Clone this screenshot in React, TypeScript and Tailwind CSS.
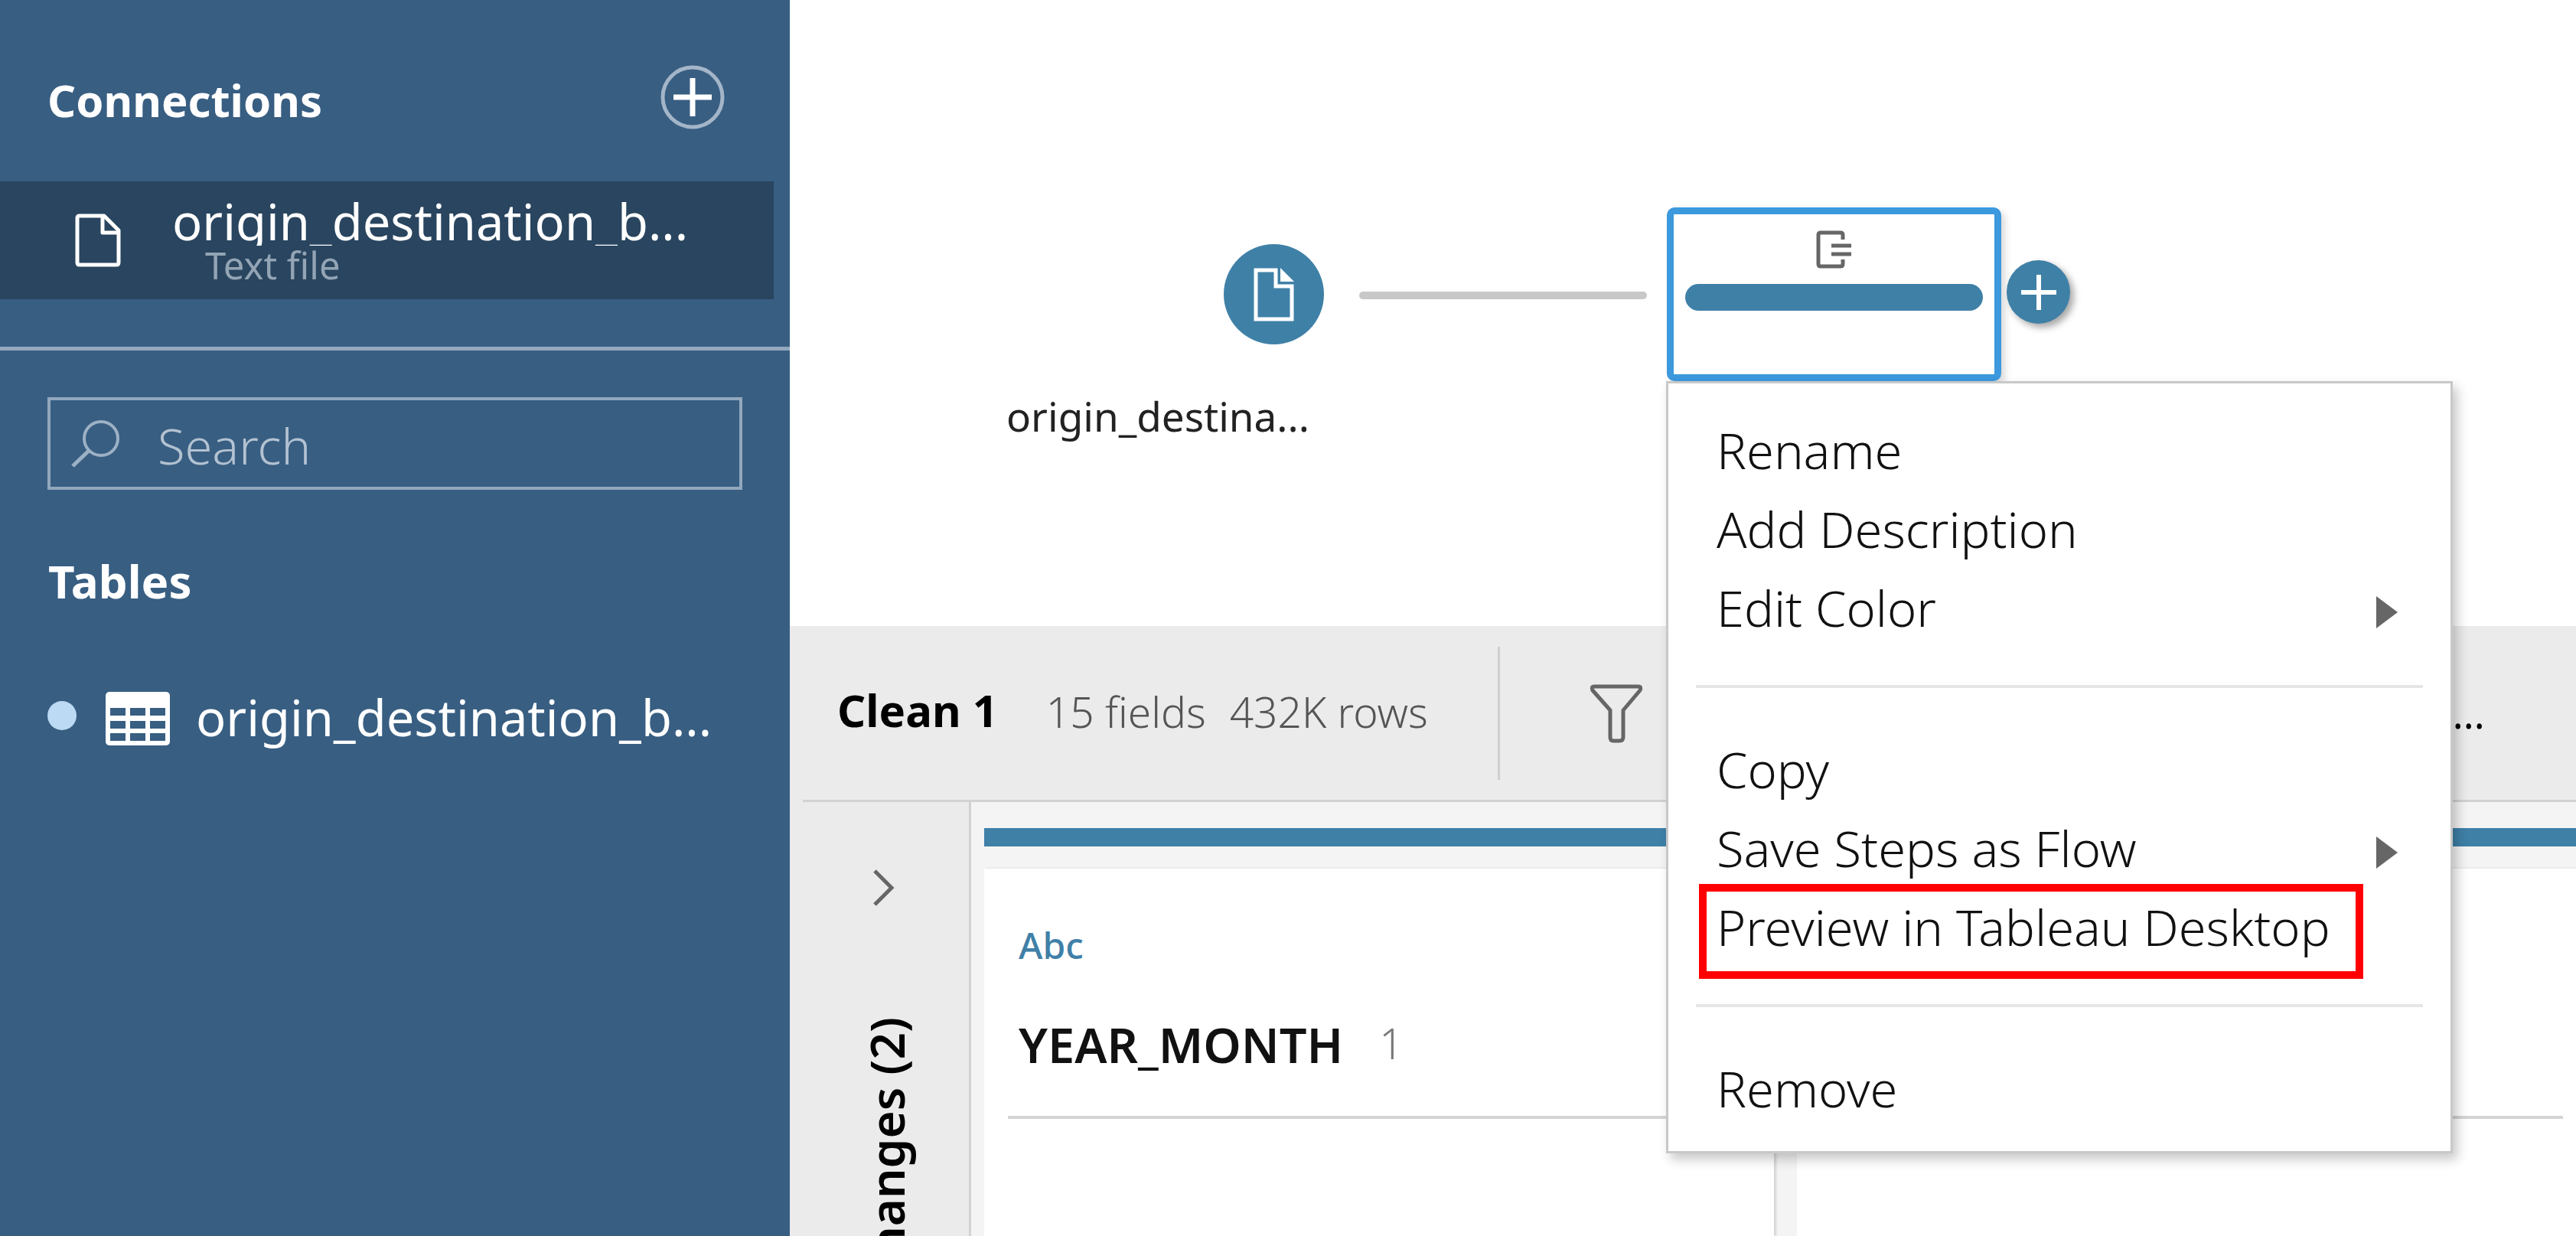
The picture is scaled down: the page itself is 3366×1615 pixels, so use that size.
import React from "react";

function FileIcon() {
  return (
    <svg width="60" height="70" viewBox="0 0 60 70" fill="none" stroke="#fff" strokeWidth="5" strokeLinejoin="round" aria-hidden="true">
      <path d="M6 3H38L57 22V64Q57 67 54 67H6Q3 67 3 64V6Q3 3 6 3Z" />
      <path d="M36 4V25H56" />
    </svg>
  );
}

function FileNodeIcon() {
  return (
    <svg width="54" height="70" viewBox="0 0 54 70" aria-hidden="true">
      <path d="M3 3H29V24H50V67H3Z" fill="none" stroke="#fff" strokeWidth="5" />
      <path d="M35 0L53 18H35Z" fill="#fff" />
    </svg>
  );
}

function TableIcon() {
  return (
    <svg width="84" height="70" viewBox="0 0 84 70" aria-hidden="true">
      <rect width="84" height="70" rx="5" fill="#fff" />
      <g fill="#385e82">
        {[21, 38, 54].map((y) =>
          [6, 32, 58].map((x) => <rect key={`${x}-${y}`} x={x} y={y} width="20" height="10" />),
        )}
      </g>
    </svg>
  );
}

function SearchIcon() {
  return (
    <svg width="64" height="62" viewBox="0 0 64 62" fill="none" stroke="#9db1c5" strokeWidth="4" aria-hidden="true">
      <circle cx="39" cy="24" r="22" />
      <path d="M24 39L2 60" strokeWidth="5" />
    </svg>
  );
}

function CleanIcon() {
  return (
    <svg width="48" height="50" viewBox="0 0 48 50" fill="none" stroke="#666" strokeWidth="5" aria-hidden="true">
      <path d="M35 12V6Q35 3 32 3H6Q3 3 3 6V44Q3 47 6 47H32Q35 47 35 44V38" />
      <path d="M20 20H46M20 31H46" />
    </svg>
  );
}

function FilterIcon() {
  return (
    <svg width="70" height="78" viewBox="0 0 70 78" fill="none" stroke="#666" strokeWidth="5" strokeLinejoin="round" aria-hidden="true">
      <path d="M6 4H64Q68 4 66 9L44 35V70Q44 75 39 75H31Q27 75 27 70V35L4 9Q2 4 6 4Z" />
    </svg>
  );
}

function SubmenuArrow() {
  return (
    <svg className="mt-3" width="28" height="42" viewBox="0 0 28 42" aria-hidden="true">
      <path d="M0 0L28 21L0 42Z" fill="#666" />
    </svg>
  );
}

function MenuItem({ label, submenu = false, marked = false }: { label: string; submenu?: boolean; marked?: boolean }) {
  return (
    <button
      type="button"
      role="menuitem"
      className="relative flex h-[103px] w-full items-center justify-between pr-[69px] pl-[63px] text-left text-[65px] leading-[88px] font-light text-[#111]"
    >
      {label}
      {submenu && <SubmenuArrow />}
      {marked && <span className="absolute -top-1 left-10 h-[124px] w-[868px] border-10 border-[#ff0000]" />}
    </button>
  );
}

function Separator() {
  return <div role="separator" className="mx-9 mt-[50px] mb-[54px] h-1 bg-[#e6e6e6]" />;
}

function StepMenu() {
  return (
    <div
      role="menu"
      aria-label="Clean 1"
      className="absolute top-[498px] left-[1145px] w-[1028px] border-3 border-[#c8c8c8] bg-white pt-[35px] pb-[31px] shadow-[6px_8px_14px_rgba(0,0,0,0.22)]"
    >
      <MenuItem label="Rename" />
      <MenuItem label="Add Description" />
      <MenuItem label="Edit Color" submenu />
      <Separator />
      <MenuItem label="Copy" />
      <MenuItem label="Save Steps as Flow" submenu />
      <MenuItem label="Preview in Tableau Desktop" marked />
      <Separator />
      <MenuItem label="Remove" />
    </div>
  );
}

function Sidebar() {
  return (
    <aside className="w-[1032px] shrink-0 bg-[#385e82] text-white">
      <div className="flex h-[237px] items-center justify-between pr-[85px] pb-[12px] pl-[62px]">
        <h2 className="pt-[36px] text-[58px] leading-[80px] font-bold">Connections</h2>
        <button type="button" aria-label="Add connection" className="mt-[28px]">
          <svg width="84" height="84" viewBox="0 0 84 84" fill="none" aria-hidden="true">
            <circle cx="42" cy="42" r="39" stroke="#a3b5c8" strokeWidth="5" />
            <path d="M42 17V67M17 42H67" stroke="#fff" strokeWidth="7" />
          </svg>
        </button>
      </div>

      <button type="button" className="flex h-[154px] w-[1011px] items-center bg-[#29455f] pl-[98px] text-left">
        <FileIcon />
        <span className="flex flex-col pl-[67px]">
          <span className="h-[64px] overflow-hidden text-[65px] leading-[64px] whitespace-nowrap">
            origin_destination_b...
          </span>
          <span className="pl-[43px] text-[49px] leading-[50px] text-[#93a4b5]">Text file</span>
        </span>
      </button>

      <div className="mt-[62px] h-[5px] bg-[#94a8be]" />

      <label className="mt-[61px] mr-[62px] ml-[62px] flex h-[121px] items-center border-4 border-[#93a8bd] pl-[27px]">
        <SearchIcon />
        <input
          type="text"
          aria-label="Search"
          placeholder="Search"
          className="ml-[49px] min-w-0 flex-1 bg-transparent pt-1 text-[65px] leading-[88px] font-light outline-none placeholder:text-[#b3c2d1]"
        />
      </label>

      <h2 className="mt-[79px] pl-[63px] text-[60px] leading-[80px] font-bold">Tables</h2>

      <button type="button" className="mt-[92px] flex items-center pl-[62px] text-left">
        <span className="size-[38px] rounded-full bg-[#bcdaf4]" />
        <span className="ml-[38px] pt-2">
          <TableIcon />
        </span>
        <span className="ml-[34px] pt-1 text-[65px] leading-[84px] whitespace-nowrap">origin_destination_b...</span>
      </button>
    </aside>
  );
}

function FlowCanvas() {
  return (
    <section aria-label="Flow" className="relative h-[818px] shrink-0 bg-white">
      <div className="absolute top-[319px] left-[567px] flex size-[131px] items-center justify-center rounded-full bg-[#3f80a7]">
        <FileNodeIcon />
      </div>
      <p className="absolute top-[508px] left-[283px] text-[53px] leading-[72px] whitespace-nowrap text-[#222]">
        origin_destina...
      </p>
      <div className="absolute top-[381px] left-[744px] h-[10px] w-[376px] rounded-full bg-[#c8c8c8]" />
      <button
        type="button"
        aria-label="Clean 1"
        className="absolute top-[271px] left-[1146px] flex h-[227px] w-[437px] flex-col items-center rounded-[10px] border-9 border-[#3c99dd] bg-white pt-[21px] shadow-[5px_5px_10px_rgba(0,0,0,0.15)]"
      >
        <CleanIcon />
        <span className="mt-5 h-[35px] w-[389px] rounded-full bg-[#3f80a7]" />
      </button>
      <button
        type="button"
        aria-label="Add step"
        className="absolute top-[340px] left-[1590px] flex size-[83px] items-center justify-center rounded-full bg-[#3f80a7] shadow-[5px_5px_10px_rgba(0,0,0,0.35)]"
      >
        <svg width="46" height="46" viewBox="0 0 46 46" stroke="#fff" strokeWidth="6" aria-hidden="true">
          <path d="M23 0V46M0 23H46" />
        </svg>
      </button>
    </section>
  );
}

function Toolbar() {
  return (
    <div className="flex h-[227px] shrink-0 items-center bg-[#ebebeb] pl-[62px]">
      <h1 className="pb-2 text-[58px] leading-[80px] font-bold text-black">Clean 1</h1>
      <p className="flex gap-[31px] pb-1 pl-[63px] text-[55px] leading-[80px] font-light whitespace-nowrap text-[#555]">
        <span>15 fields</span>
        <span>432K rows</span>
      </p>
      <div className="ml-[91px] h-[174px] w-[3px] bg-[#cfcfcf]" />
      <button type="button" aria-label="Filter values" className="ml-[117px]">
        <FilterIcon />
      </button>
      <button type="button" aria-label="More options" className="ml-[1058px] text-[52px] leading-[80px] text-black">
        ...
      </button>
    </div>
  );
}

function FieldCard({ type, name, count }: { type?: string; name?: string; count?: number }) {
  return (
    <article className="flex w-[1032px] shrink-0 flex-col bg-white px-[31px] shadow-[3px_0_3px_#d4d4d4]">
      <div className="h-[327px] border-b-4 border-[#d4d4d4] pl-[14px]">
        <p className="pt-[68px] text-[48px] leading-[64px] font-medium text-[#3f80a7]">{type}</p>
        <div className="flex items-center pt-[58px]">
          <h3 className="text-[63px] leading-[80px] font-semibold text-[#111]">{name}</h3>
          <span className="pb-1 pl-[47px] text-[55px] leading-[72px] font-light text-[#777]">{count}</span>
        </div>
      </div>
    </article>
  );
}

function ProfilePane() {
  return (
    <div className="flex min-h-0 flex-1 bg-[#ebebeb]">
      <div className="ml-[17px] flex min-w-0 flex-1 border-t-3 border-[#d2d2d2]">
        <div className="flex w-[220px] shrink-0 flex-col items-center overflow-hidden border-r-3 border-[#d2d2d2] pt-[87px]">
          <button type="button" aria-label="Expand changes" className="mr-2">
            <svg width="30" height="50" viewBox="0 0 30 50" fill="none" stroke="#666" strokeWidth="5" aria-hidden="true">
              <path d="M4 3L26 25L4 47" />
            </svg>
          </button>
          <h2 className="mt-[144px] rotate-180 text-[62px] leading-[80px] font-semibold whitespace-nowrap text-black [writing-mode:vertical-rl]">
            Changes (2)
          </h2>
        </div>
        <div className="flex min-w-0 flex-1 flex-col overflow-hidden bg-[#f4f4f4] pt-[34px] pl-[17px]">
          <div className="h-6 shrink-0 bg-[#3f80a7]" />
          <div className="mt-[29px] flex flex-1 gap-[30px]">
            <FieldCard type="Abc" name="YEAR_MONTH" count={1} />
            <FieldCard />
          </div>
        </div>
      </div>
    </div>
  );
}

export default function App() {
  return (
    <div className="flex h-screen overflow-hidden bg-white font-['Noto_Sans','Open_Sans',sans-serif]">
      <Sidebar />
      <main className="relative flex min-w-0 flex-1 flex-col overflow-hidden">
        <FlowCanvas />
        <Toolbar />
        <ProfilePane />
        <StepMenu />
      </main>
    </div>
  );
}
